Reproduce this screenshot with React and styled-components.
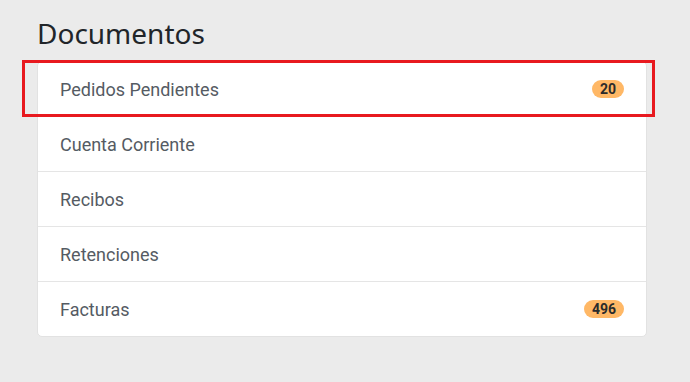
import styled, { createGlobalStyle } from "styled-components";

const GlobalStyle = createGlobalStyle`
    body {
        margin: 0;
        background-color: #ebebeb;
        font-family: Roboto, "Liberation Sans", sans-serif;
    }
`;

const documentos = [
    { label: "Pedidos Pendientes", count: 20, selected: true },
    { label: "Cuenta Corriente" },
    { label: "Recibos" },
    { label: "Retenciones" },
    { label: "Facturas", count: 496 },
];

export default function App() {
    return (
        <>
            <GlobalStyle />
            <Main>
                <Title>Documentos</Title>
                <List>
                    {documentos.map((doc) => (
                        <Item key={doc.label} $selected={doc.selected}>
                            <span>{doc.label}</span>
                            {doc.count != null && <Badge>{doc.count}</Badge>}
                        </Item>
                    ))}
                </List>
            </Main>
        </>
    );
}

const Main = styled.main`
    height: 382px;
    box-sizing: border-box;
    padding: 14px 43px 0 37px;
`;

const Title = styled.h1`
    margin: 0 0 9px;
    font-family: "Noto Sans", "Open Sans", sans-serif;
    font-weight: 400;
    font-size: 28px;
    line-height: 38px;
    color: #212529;
`;

const List = styled.ul`
    margin: 0;
    padding: 0;
    list-style: none;
    background-color: #fff;
    border: 1px solid #e2e2e2;
    border-radius: 5px;
`;

const Item = styled.li`
    position: relative;
    display: flex;
    align-items: center;
    justify-content: space-between;
    height: 54px;
    padding: 0 22px 0 22px;
    font-size: 18px;
    color: #555b63;
    border-top: 1px solid #e5e5e5;

    &:first-child {
        border-top: none;
    }

    ${(props) => props.$selected && `
        &::after {
            content: "";
            position: absolute;
            z-index: 1;
            left: -16px;
            right: -9px;
            top: -2px;
            bottom: -1px;
            border: 3px solid #e8191f;
            pointer-events: none;
        }
    `}
`;

const Badge = styled.span`
    display: inline-block;
    padding: 0 8px;
    height: 18px;
    line-height: 18px;
    border-radius: 9px;
    background-color: #ffb866;
    color: #2b2b2b;
    font-size: 14px;
    font-weight: 700;
`;
